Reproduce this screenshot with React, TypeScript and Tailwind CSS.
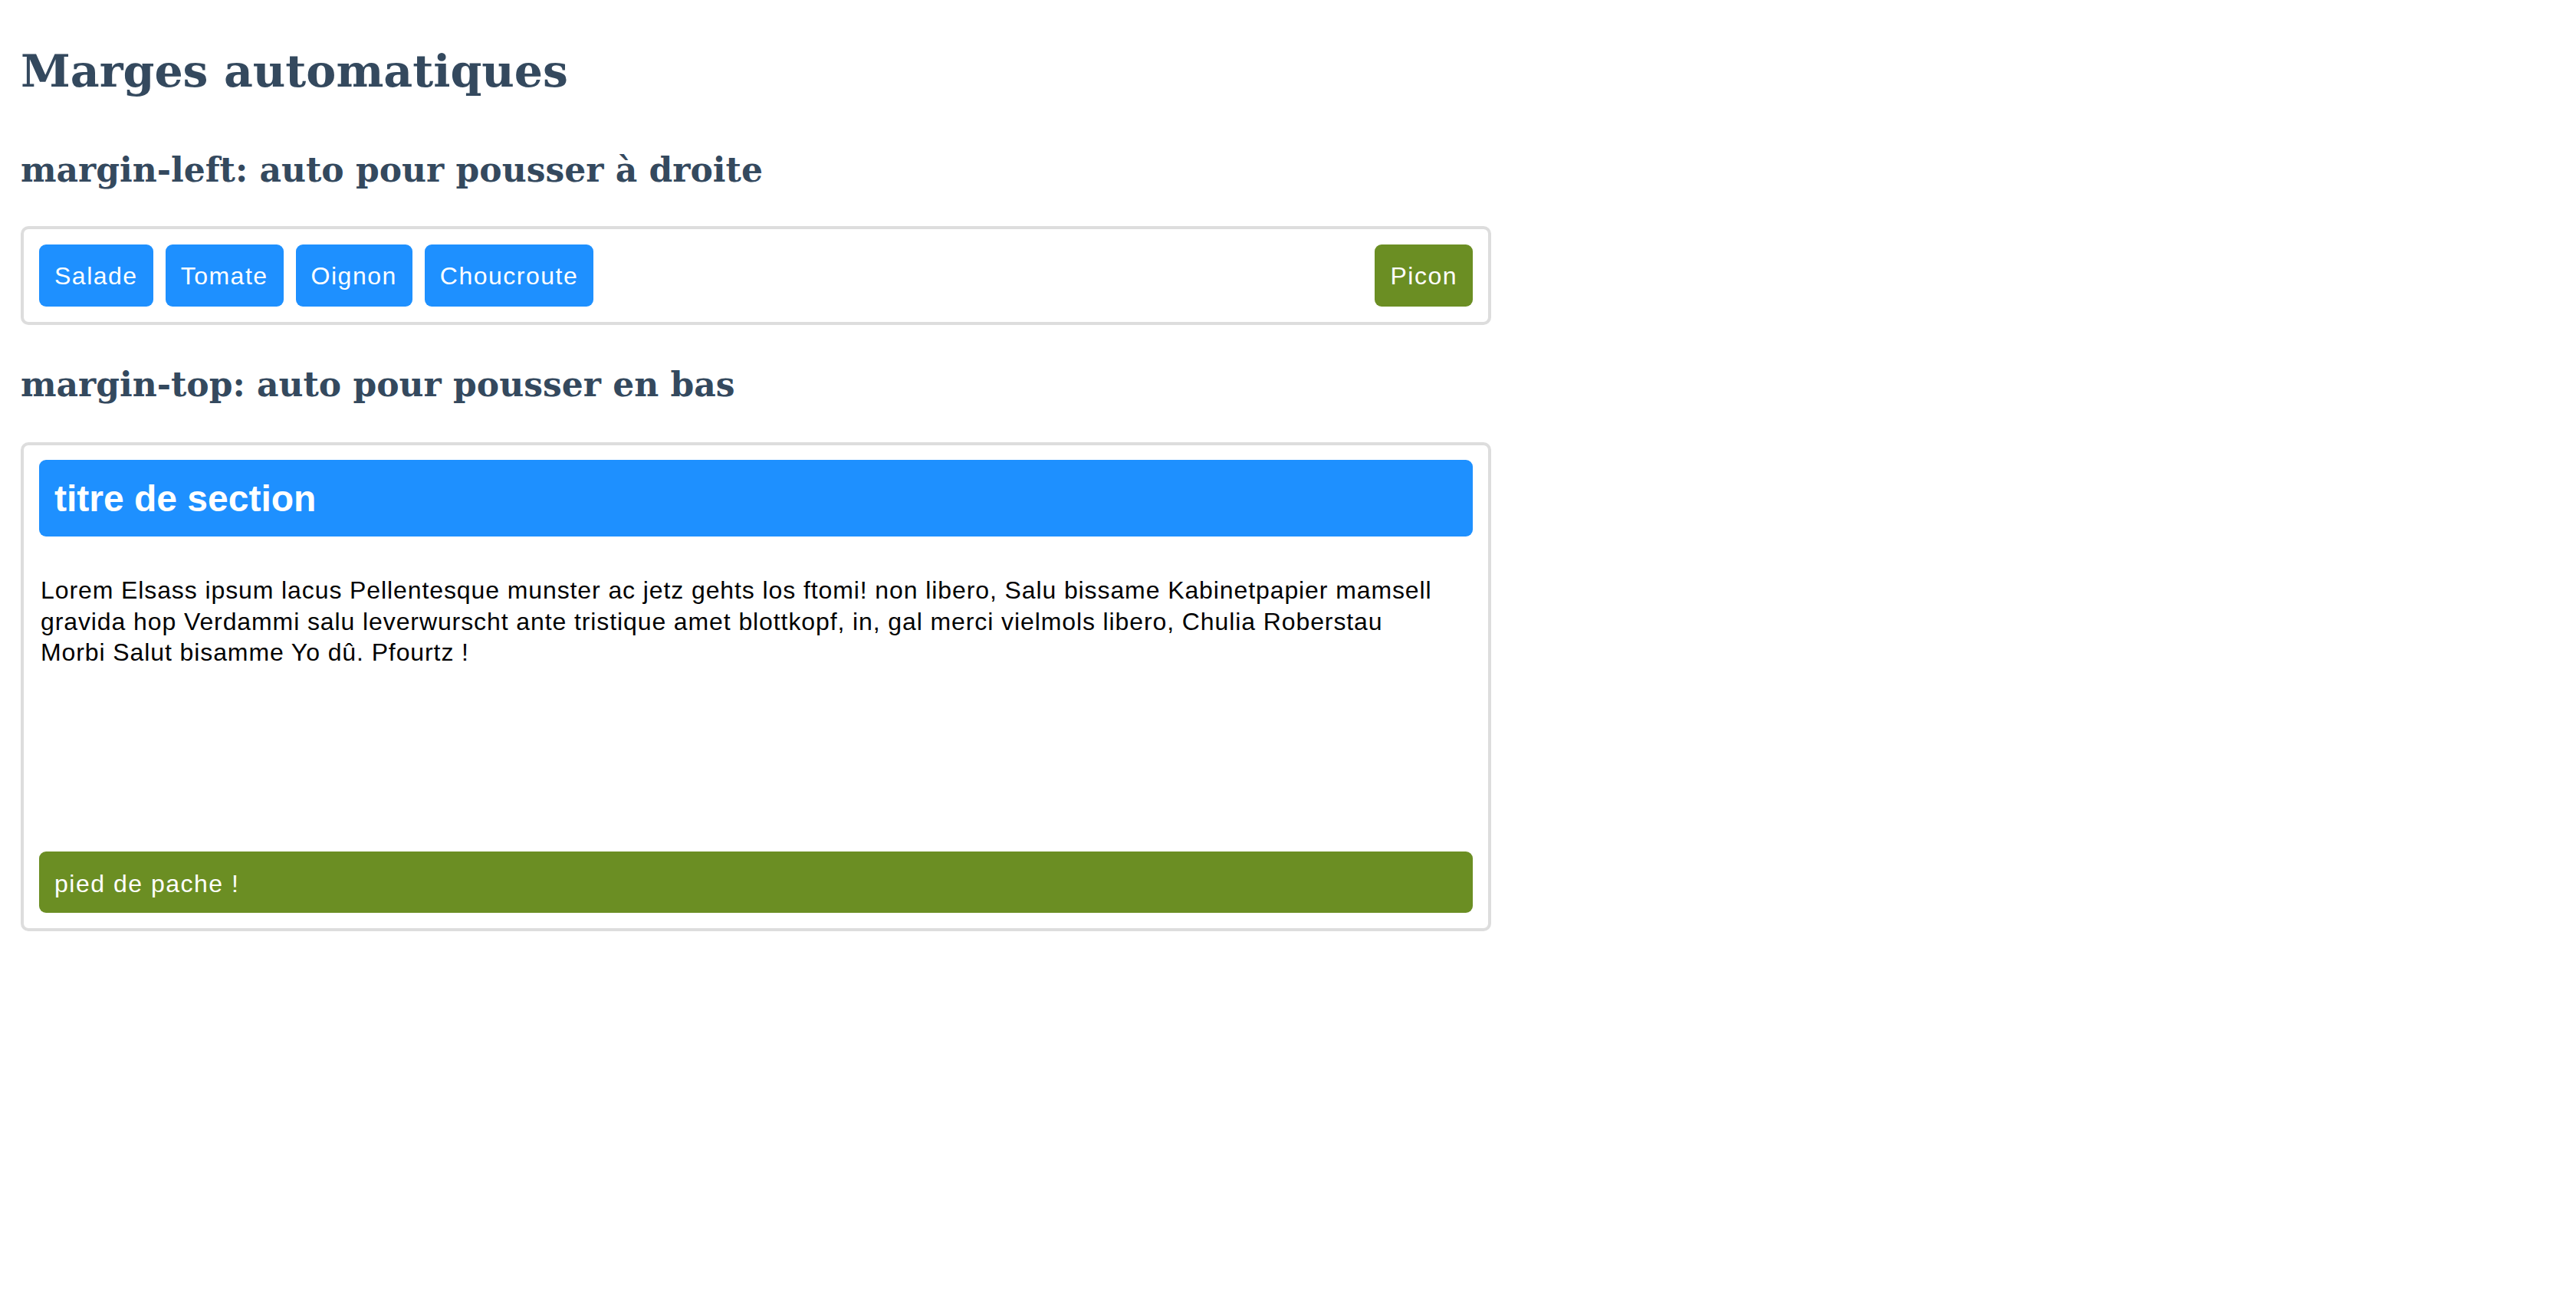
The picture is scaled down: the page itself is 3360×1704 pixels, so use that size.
const tags = ["Salade", "Tomate", "Oignon", "Choucroute"];

const headingFont = "font-['DejaVu_Serif',serif] font-bold text-[#34495e]";
const bodyFont = "font-['Liberation_Sans',Arial,sans-serif]";

export default function App() {
  return (
    <div className="min-h-screen bg-white px-[27px] pt-[61px]">
      <div className="w-[1918px]">
        {/* Titre principal */}
        <h1 className={`${headingFont} text-[58.5px] leading-[64px]`}>
          Marges automatiques
        </h1>

        {/* margin-left: auto */}
        <h2 className={`${headingFont} mt-[73px] text-[44px] leading-[48px]`}>
          margin-left: auto pour pousser à droite
        </h2>
        <div
          className={`${bodyFont} mt-[49px] flex gap-[16px] rounded-[10px] border-4 border-[#dddddd] p-[20px]`}
        >
          {tags.map((tag) => (
            <span
              key={tag}
              className="flex h-[81px] items-center rounded-[9px] bg-[#1e90ff] px-[20px] text-[32px] tracking-[1.5px] text-white"
            >
              {tag}
            </span>
          ))}
          <span className="ml-auto flex h-[81px] items-center rounded-[9px] bg-[#6b8e23] px-[20px] text-[32px] tracking-[1.5px] text-white">
            Picon
          </span>
        </div>

        {/* margin-top: auto */}
        <h2 className={`${headingFont} mt-[54px] text-[44px] leading-[48px]`}>
          margin-top: auto pour pousser en bas
        </h2>
        <div
          className={`${bodyFont} mt-[51px] flex h-[638px] flex-col rounded-[10px] border-4 border-[#dddddd] px-[20px] pt-[19px] pb-[20px]`}
        >
          <div className="rounded-[9px] bg-[#1e90ff] px-[20px] pt-[21px] pb-[19px] text-[48px] font-bold leading-[60px] text-white">
            titre de section
          </div>
          <p className="mt-[50px] max-w-[1844px] px-[2px] text-[32px] leading-[40.5px] tracking-[0.9px] text-black">
            Lorem Elsass ipsum lacus Pellentesque munster ac jetz gehts los
            ftomi! non libero, Salu bissame Kabinetpapier mamsell gravida hop
            Verdammi salu leverwurscht ante tristique amet blottkopf, in, gal
            merci vielmols libero, Chulia Roberstau Morbi Salut bisamme Yo dû.
            Pfourtz !
          </p>
          <div className="mt-auto rounded-[9px] bg-[#6b8e23] px-[20px] pt-[22px] pb-[18px] text-[32px] leading-[40px] tracking-[1.5px] text-white">
            pied de pache !
          </div>
        </div>
      </div>
    </div>
  );
}
